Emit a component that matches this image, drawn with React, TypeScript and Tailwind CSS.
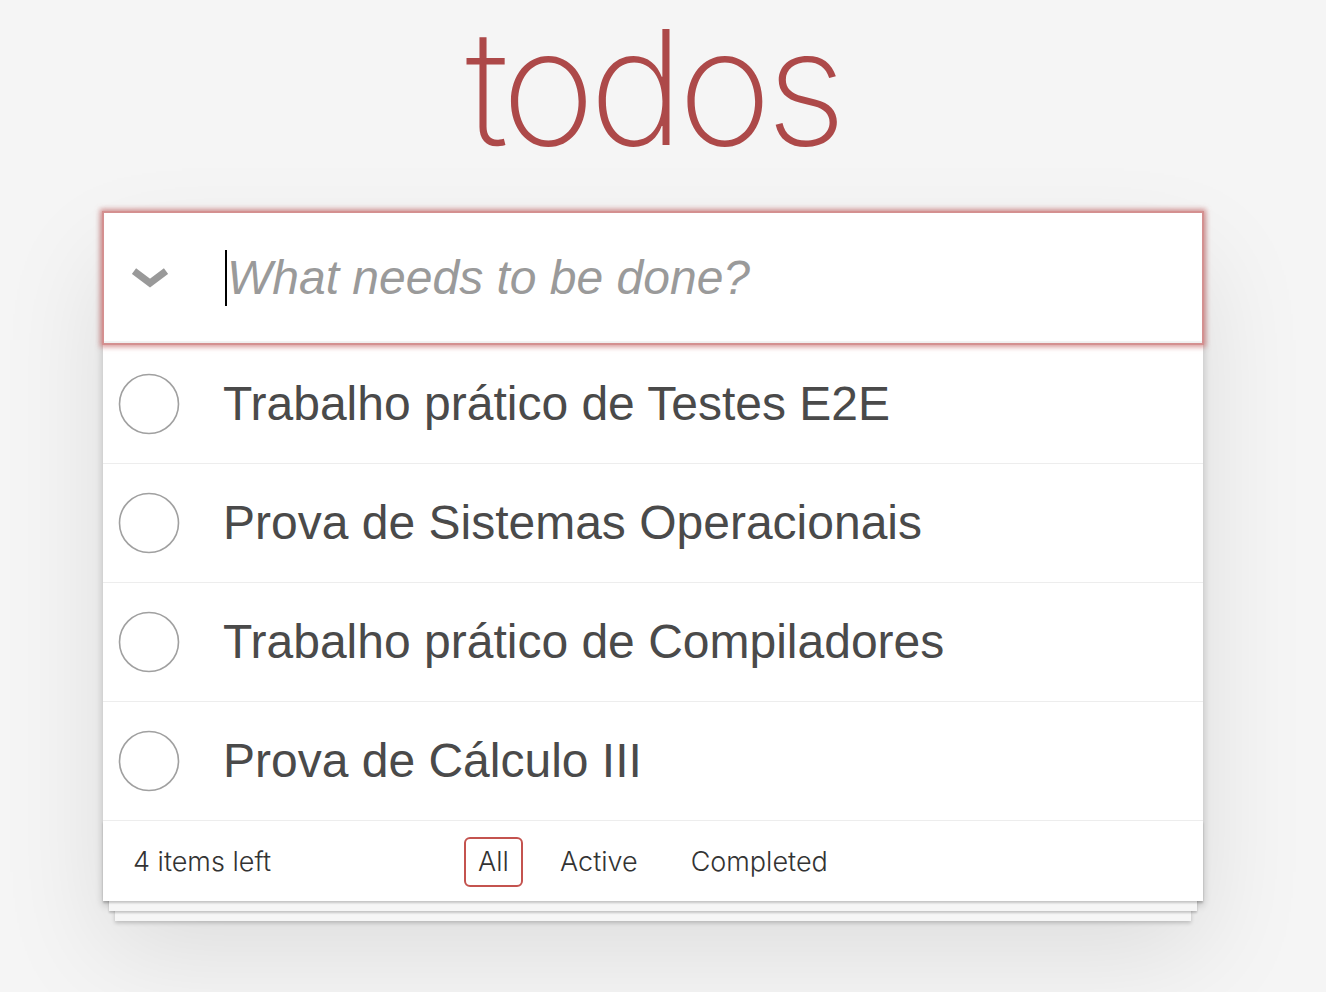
import React from "react";

const todos = [
  "Trabalho prático de Testes E2E",
  "Prova de Sistemas Operacionais",
  "Trabalho prático de Compiladores",
  "Prova de Cálculo III",
];

function Circle() {
  return (
    <svg width="62" height="62" viewBox="0 0 62 62" className="shrink-0">
      <circle cx="31" cy="31" r="29.5" fill="none" stroke="#a0a0a0" strokeWidth="1.6" />
    </svg>
  );
}

function Chevron() {
  return (
    <svg width="36" height="24" viewBox="0 0 36 24">
      <polyline
        points="2,4 18,16 34,4"
        fill="none"
        stroke="#999"
        strokeWidth="7"
        strokeLinejoin="miter"
        strokeLinecap="butt"
      />
    </svg>
  );
}

export default function App() {
  return (
    <div className="min-h-[992px] bg-[#f5f5f5] font-['Liberation_Sans',Arial,sans-serif]">
      <div className="w-[1306px] flex flex-col items-center">
        <h1 className="h-[211px] pt-[2px] text-[160px] leading-[170px] font-extralight text-[#ad4949] font-['Inter',sans-serif] tracking-[-6px]">
          todos
        </h1>

        <section className="w-[1100px] bg-white shadow-[0_4px_8px_rgba(0,0,0,0.2),0_50px_100px_rgba(0,0,0,0.1)]">
          <div className="h-[134px] flex items-center border-2 border-[#d49090] shadow-[0_0_5px_2px_rgba(200,110,110,0.7),inset_0_-2px_1px_rgba(0,0,0,0.06)] -mx-[1px] relative z-10">
            <div className="w-[121px] pl-[28px] flex items-center pt-[2px]">
              <Chevron />
            </div>
            <div className="flex items-center">
              <span className="w-[2px] h-[56px] bg-black" />
              <span className="text-[48px] italic font-light text-[#9a9a9a] leading-none">
                What needs to be done?
              </span>
            </div>
          </div>

          <ul>
            {todos.map((t) => (
              <li
                key={t}
                className="h-[119px] flex items-center border-b border-[#ededed]"
              >
                <div className="w-[120px] pl-[15px] flex items-center">
                  <Circle />
                </div>
                <span className="text-[48px] text-[#4a4a4a] leading-none">{t}</span>
              </li>
            ))}
          </ul>

          <footer className="h-[80px] flex items-center px-[30px] pt-[2px] text-[27px] font-light text-[#333] font-['Inter',sans-serif] shadow-[0_2px_2px_rgba(0,0,0,0.2),0_16px_0_-6px_#f6f6f6,0_18px_2px_-6px_rgba(0,0,0,0.2),0_32px_0_-12px_#f6f6f6,0_34px_4px_-12px_rgba(0,0,0,0.2)]">
            <span className="w-[331px]">4 items left</span>
            <div className="flex items-center">
              <span className="h-[50px] w-[59px] flex items-center justify-center border-2 border-[#c4534f] rounded-[6px]">
                All
              </span>
              <span className="ml-[37px]">Active</span>
              <span className="ml-[53px]">Completed</span>
            </div>
          </footer>
        </section>
      </div>
    </div>
  );
}
